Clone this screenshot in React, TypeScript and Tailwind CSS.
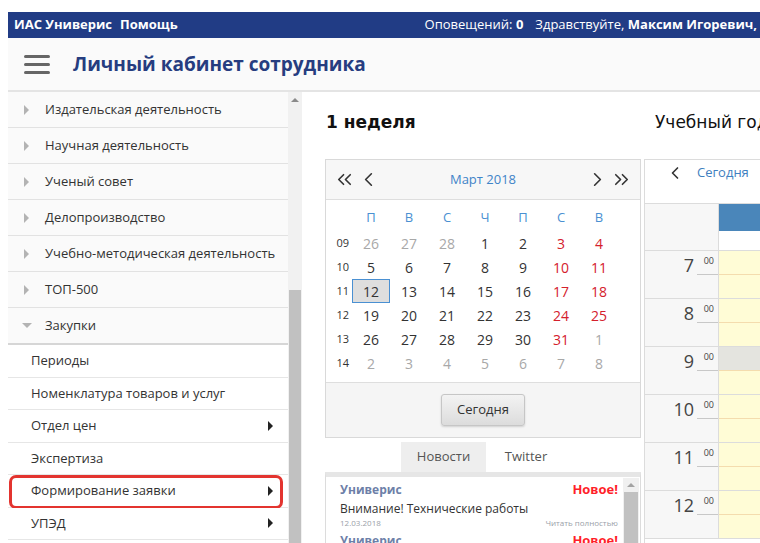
import { ChevronLeft, ChevronRight, ChevronsLeft, ChevronsRight } from "lucide-react";

const SECTIONS = [
  "Издательская деятельность",
  "Научная деятельность",
  "Ученый совет",
  "Делопроизводство",
  "Учебно-методическая деятельность",
  "ТОП-500",
];

const PURCHASES = [
  { title: "Периоды", sub: false },
  { title: "Номенклатура товаров и услуг", sub: false },
  { title: "Отдел цен", sub: true },
  { title: "Экспертиза", sub: false },
  { title: "Формирование заявки", sub: true, active: true },
  { title: "УПЭД", sub: true },
];

const WEEKDAYS = ["П", "В", "С", "Ч", "П", "С", "В"];

// kind: 0 - текущий месяц, 1 - соседний месяц
const WEEKS: { no: string; days: [number, number][] }[] = [
  { no: "09", days: [[26, 1], [27, 1], [28, 1], [1, 0], [2, 0], [3, 0], [4, 0]] },
  { no: "10", days: [[5, 0], [6, 0], [7, 0], [8, 0], [9, 0], [10, 0], [11, 0]] },
  { no: "11", days: [[12, 0], [13, 0], [14, 0], [15, 0], [16, 0], [17, 0], [18, 0]] },
  { no: "12", days: [[19, 0], [20, 0], [21, 0], [22, 0], [23, 0], [24, 0], [25, 0]] },
  { no: "13", days: [[26, 0], [27, 0], [28, 0], [29, 0], [30, 0], [31, 0], [1, 1]] },
  { no: "14", days: [[2, 1], [3, 1], [4, 1], [5, 1], [6, 1], [7, 1], [8, 1]] },
];

const HOURS = [7, 8, 9, 10, 11, 12];

function dayColor(kind: number, col: number) {
  if (kind === 1) return "text-[#a8a8a8]";
  if (col >= 5) return "text-[#d4202c]";
  return "text-[#333]";
}

function MiniCalendar() {
  return (
    <div className="border border-[#d9d9d9] bg-white">
      <div className="h-[40px] bg-[#f7f7f7] border-b border-[#dedede] flex items-center px-[7px] text-[#333]">
        <ChevronsLeft className="w-[23px] h-[23px]" strokeWidth={1.7} />
        <ChevronLeft className="w-[23px] h-[23px] ml-[1px]" strokeWidth={1.7} />
        <div className="flex-1 text-center text-[13px] text-[#3f84c8]">Март 2018</div>
        <ChevronRight className="w-[23px] h-[23px] mr-[1px]" strokeWidth={1.7} />
        <ChevronsRight className="w-[23px] h-[23px]" strokeWidth={1.7} />
      </div>
      <div className="pt-[7px] pb-[7px] grid grid-cols-[26px_repeat(7,38px)] auto-rows-[24px]">
        <div />
        {WEEKDAYS.map((d, i) => (
          <div key={i} className="flex items-center justify-center text-[13px] text-[#4a90d2] mb-[3px]">
            {d}
          </div>
        ))}
        {WEEKS.map((w) => (
          <>
            <div key={w.no} className="flex items-center justify-end pr-[3px] text-[11px] text-[#333]">
              {w.no}
            </div>
            {w.days.map(([n, kind], i) => (
              <div
                key={w.no + "-" + i}
                className={`flex items-center justify-center text-[14px] ${dayColor(kind, i)} ${
                  w.no === "11" && i === 0 ? "bg-[#dedede] border border-[#4a90d2]" : ""
                }`}
              >
                {n}
              </div>
            ))}
          </>
        ))}
      </div>
      <div className="bg-[#f5f5f5] border-t border-[#dedede] h-[55px] flex justify-center pt-[11px]">
        <button className="h-[32px] px-[15px] rounded-[3px] border border-[#c6c6c6] bg-gradient-to-b from-[#f3f3f3] to-[#dcdcdc] text-[13px] text-[#333] shadow-[0_1px_2px_rgba(0,0,0,0.15)]">
          Сегодня
        </button>
      </div>
    </div>
  );
}

function NewsItem() {
  return (
    <div className="pb-[2px]">
      <div className="flex items-center justify-between h-[22px]">
        <span className="text-[12px] font-bold text-[#6d7fa8]">Универис</span>
        <span className="text-[13px] font-bold text-[#ff1f2a]">Новое!</span>
      </div>
      <div className="text-[12px] text-[#333] leading-[16px]">Внимание! Технические работы</div>
      <div className="flex justify-between text-[8px] text-[#9aa0a8] leading-[11px]">
        <span>12.03.2018</span>
        <span>Читать полностью</span>
      </div>
    </div>
  );
}

function News() {
  return (
    <div>
      <div className="flex h-[30px] pl-[76px] text-[13px]">
        <div className="w-[85px] bg-[#eeeeee] flex items-center justify-center text-[#555]">Новости</div>
        <div className="w-[80px] flex items-center justify-center text-[#555]">Twitter</div>
      </div>
      <div className="border border-[#dcdcdc] border-t-[5px] border-t-[#e6e6e6] flex h-[80px] overflow-hidden">
        <div className="flex-1 pl-[14px] pr-[5px] pt-[2px]">
          <NewsItem />
          <NewsItem />
        </div>
        <div className="w-[16px] bg-[#f0f0f0] flex flex-col items-center mt-[1px] mr-[1px]">
          <div className="h-[14px] flex items-center justify-center">
            <div className="w-0 h-0 border-x-[4px] border-x-transparent border-b-[4px] border-b-[#a3a3a3]" />
          </div>
          <div className="w-[14px] flex-1 bg-[#c1c1c1]" />
        </div>
      </div>
    </div>
  );
}

function DayView() {
  return (
    <div className="w-[130px] shrink-0 border-l border-t border-[#dcdcdc] flex flex-col">
      <div className="h-[44px] flex items-start pt-[3px] pl-[20px] gap-[12px] border-b border-[#dcdcdc] bg-white">
        <ChevronLeft className="w-[20px] h-[20px] text-[#333]" strokeWidth={2} />
        <span className="text-[13px] text-[#3f7fc0]">Сегодня</span>
      </div>
      <div className="flex h-[47px] border-b border-[#dcdcdc]">
        <div className="w-[74px] bg-[#f7f7f7] border-r border-[#dcdcdc]" />
        <div className="flex-1 flex flex-col">
          <div className="h-[27px] bg-[#4a86ba]" />
          <div className="flex-1 bg-white" />
        </div>
      </div>
      {HOURS.map((h) => (
        <div key={h} className="flex h-[48px] border-b border-[#dcdcdc]">
          <div className="w-[74px] bg-[#f7f7f7] border-r border-[#dcdcdc] relative">
            <div className="absolute right-[24px] top-[2px] text-[18px] leading-[24px] text-[#444]">{h}</div>
            <div className="absolute right-[4px] top-[3px] text-[9px] text-[#444]">00</div>
            <div className="absolute right-0 top-[23px] w-[21px] border-b border-[#c8c8c8]" />
          </div>
          <div className="flex-1 flex flex-col bg-[#fffcd6]">
            <div className={`h-[24px] border-b border-[#f4dcae] ${h === 9 ? "bg-[#e4e4df]" : ""}`} />
            <div className="flex-1" />
          </div>
        </div>
      ))}
    </div>
  );
}

export default function App() {
  return (
    <div
      className="h-[543px] w-[760px] overflow-hidden bg-white pl-[8px] pt-[12px]"
      style={{ fontFamily: "'Open Sans', 'Noto Sans', sans-serif" }}
    >
      {/* Верхняя полоса */}
      <div className="h-[26px] bg-[#213c85] flex items-center text-white text-[13px] whitespace-nowrap overflow-hidden">
        <span className="ml-[6px] font-bold">ИАС Универис</span>
        <span className="ml-[8px] font-bold">Помощь</span>
        <span className="ml-[247px]">
          Оповещений: <b>0</b>
        </span>
        <span className="ml-[12px]">
          Здравствуйте, <b>Максим Игоревич, </b>
        </span>
      </div>

      {/* Заголовок */}
      <div className="h-[54px] bg-[#fafafa] border-b-2 border-[#e4e4e4] flex items-center">
        <div className="ml-[16px] w-[26px] flex flex-col gap-[5px]">
          <div className="h-[3px] rounded-full bg-[#666]" />
          <div className="h-[3px] rounded-full bg-[#666]" />
          <div className="h-[3px] rounded-full bg-[#666]" />
        </div>
        <h1 className="ml-[23px] text-[19px] font-bold text-[#263d80]">Личный кабинет сотрудника</h1>
      </div>

      <div className="flex">
        {/* Меню */}
        <div className="w-[280px] shrink-0">
          {SECTIONS.map((s) => (
            <div key={s} className="h-[36px] bg-[#fafafa] border-b border-[#e2e2e2] flex items-center text-[13px] text-[#333]">
              <div className="ml-[16px] w-0 h-0 border-y-[5px] border-y-transparent border-l-[5px] border-l-[#b3b3b3]" />
              <span className="ml-[16px]">{s}</span>
            </div>
          ))}
          <div className="h-[37px] bg-[#fafafa] border-b-2 border-[#d6d6d6] flex items-center text-[13px] text-[#333]">
            <div className="ml-[14px] w-0 h-0 border-x-[5px] border-x-transparent border-t-[5px] border-t-[#b3b3b3]" />
            <span className="ml-[13px]">Закупки</span>
          </div>
          {PURCHASES.map((p) => (
            <div
              key={p.title}
              className="relative h-[32.5px] bg-white border-b border-[#e6e6e6] flex items-center justify-between text-[13px] text-[#333]"
            >
              <span className="ml-[23px]">{p.title}</span>
              {p.sub && (
                <div className="mr-[15px] w-0 h-0 border-y-[5px] border-y-transparent border-l-[5px] border-l-[#222]" />
              )}
              {p.active && (
                <div className="absolute left-[1px] right-[5px] top-0 bottom-[-2px] border-[3px] border-[#e3342f] rounded-[7px]" />
              )}
            </div>
          ))}
        </div>
        <div className="w-[14px] shrink-0 bg-[#f1f1f1] h-[455px] flex flex-col items-center">
          <div className="h-[16px] flex items-center justify-center">
            <div className="w-0 h-0 border-x-[4px] border-x-transparent border-b-[4px] border-b-[#8a8a8a]" />
          </div>
          <div className="mt-[182px] w-[12px] flex-1 bg-[#c1c1c1]" />
        </div>

        {/* Расписание */}
        <div className="flex-1 min-w-0 pl-[23px]">
          <div
            className="h-[67px] flex items-start pt-[18px] whitespace-nowrap"
            style={{ fontFamily: "'DejaVu Sans', sans-serif" }}
          >
            <div className="w-[330px] shrink-0 pl-[1px] text-[17px] font-bold text-[#111]">1 неделя</div>
            <div className="shrink-0 text-[17px] text-[#111]">Учебный год</div>
          </div>
          <div className="flex gap-[3px]">
            <div className="w-[316px] shrink-0 flex flex-col gap-[4px]">
              <MiniCalendar />
              <News />
            </div>
            <DayView />
          </div>
        </div>
      </div>
    </div>
  );
}
